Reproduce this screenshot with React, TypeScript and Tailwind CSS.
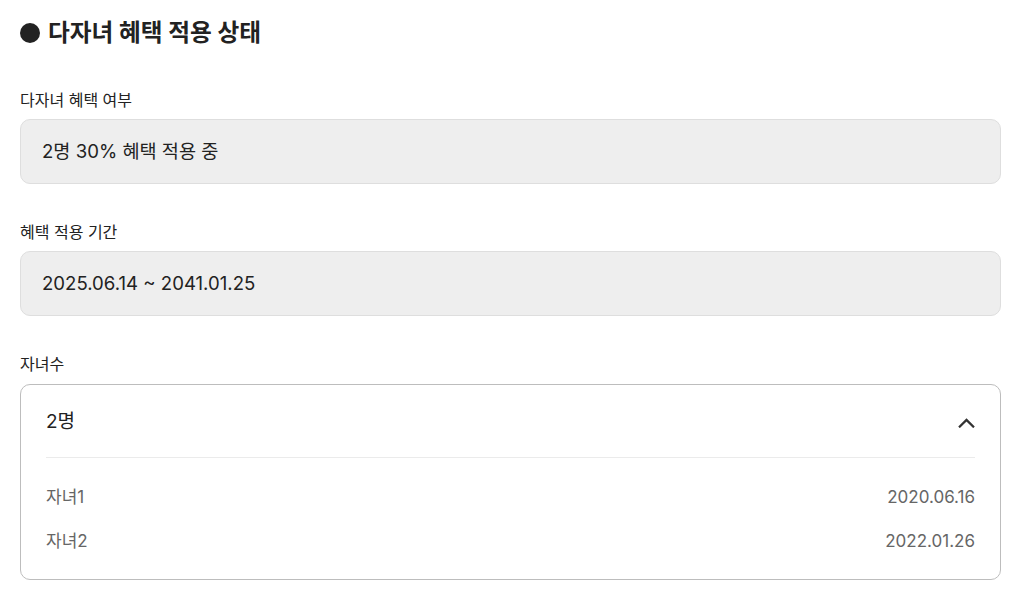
import React from "react";

const font = {
  fontFamily: 'Inter, "Noto Sans CJK KR", sans-serif',
};

// 읽기 전용 입력 박스
const ReadonlyField = ({ label, value }: { label: string; value: string }) => (
  <div className="flex flex-col">
    <label className="text-[16px] leading-[20px] text-[#222]">{label}</label>
    <div className="mt-[9px] h-[65px] flex items-center px-[21px] rounded-[10px] bg-[#eeeeee] border border-[#dedede] text-[18.6px] text-[#222]">
      {value}
    </div>
  </div>
);

const children = [
  { name: "자녀1", date: "2020.06.16" },
  { name: "자녀2", date: "2022.01.26" },
];

export default function App() {
  return (
    <div className="bg-white min-h-screen px-5 pt-[18px]" style={font}>
      <div className="w-[981px]">
        <h2 className="flex items-center gap-2 text-[23.7px] leading-[30px] font-bold text-[#222]">
          <span className="w-5 h-5 rounded-full bg-[#222]" />
          다자녀 혜택 적용 상태
        </h2>

        <div className="mt-[42px] flex flex-col gap-[38px]">
          <ReadonlyField label="다자녀 혜택 여부" value="2명 30% 혜택 적용 중" />
          <ReadonlyField label="혜택 적용 기간" value="2025.06.14 ~ 2041.01.25" />

          <div className="flex flex-col">
            <label className="text-[16px] leading-[20px] text-[#222]">자녀수</label>
            <div className="mt-[10px] rounded-[10px] border border-[#bdbdbd] bg-white px-[25px]">
              <div className="h-[73px] pt-[3px] flex items-center justify-between border-b border-[#ebebeb]">
                <span className="text-[19px] text-[#222]">2명</span>
                <svg width="17" height="10" viewBox="0 0 17 10" fill="none" stroke="#333" strokeWidth="2.2" strokeLinecap="square" strokeLinejoin="miter">
                  <path d="M1.8 8.6L8.5 1.9l6.7 6.7" />
                </svg>
              </div>
              <div className="pt-[28px] pb-[27px] flex flex-col gap-[22px]">
                {children.map((c) => (
                  <div key={c.name} className="flex justify-between text-[17px] leading-[22px] text-[#666]">
                    <span>{c.name}</span>
                    <span>{c.date}</span>
                  </div>
                ))}
              </div>
            </div>
          </div>
        </div>
      </div>
    </div>
  );
}
